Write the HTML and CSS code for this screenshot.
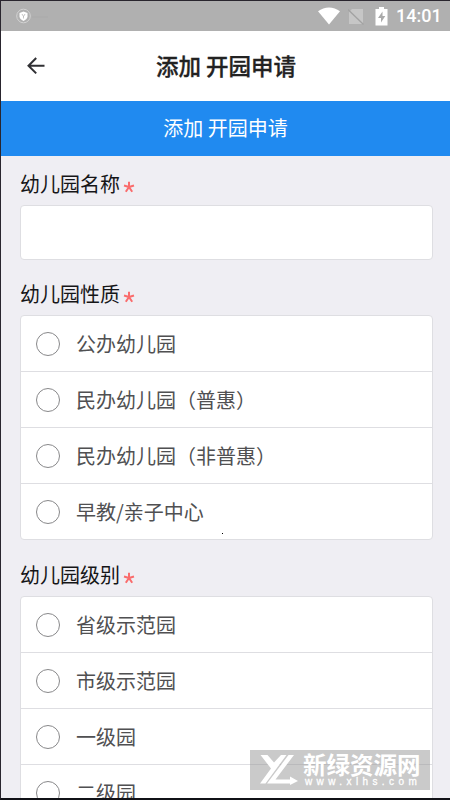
FILE: index.html
```html
<!DOCTYPE html>
<html lang="zh-CN">
<head>
<meta charset="utf-8">
<meta name="viewport" content="width=device-width, initial-scale=1">
<title>添加 开园申请</title>
<link rel="stylesheet" href="styles.css">
</head>
<body>
<div class="screen">
  <header class="status">
    <svg class="shield" width="38" height="16" viewBox="0 0 38 16">
      <circle cx="8.500" cy="8" r="6.800" fill="none" stroke="#d2d2d2" stroke-width="1"/>
      <path d="M8.500 3.600 12.500 5v3.200c0 2-1.600 3.500-4 4.700-2.400-1.200-4-2.700-4-4.700V5z" fill="#fff"/>
      <path d="M7 6 8.500 8.500 10 6M8.500 8v2.500" fill="none" stroke="#b8b8b8" stroke-width=".8"/>
      <path d="M17 9h16" stroke="#a9a9a9" stroke-width=".7"/>
    </svg>
    <div class="status-right">
      <svg class="wifi" width="22" height="18" viewBox="0 0 22 18"><path d="M0 4.300C6.500-.900 15.500-.900 22 4.300L11 17.500z" fill="#fff"/></svg>
      <svg class="sim" width="17" height="17" viewBox="0 0 17 17"><path d="M4 1h11v15H1V4z" fill="#c6c6c6"/><path d="M0 1.500 15.500 16.500" stroke="#a2a2a2" stroke-width="1.300"/></svg>
      <svg class="battery" width="13" height="19" viewBox="0 0 13 19"><path d="M4 0h5v2h3.500v16.500H.5V2H4z" fill="#fff"/><path d="M7.500 4.500 3 11h3v4.500L10.300 9H7.500z" fill="#aaa"/></svg>
      <span class="clock">14:01</span>
    </div>
  </header>
  <nav class="appbar">
    <svg class="back" width="20" height="20" viewBox="0 0 20 20"><path d="M11.200 2 3.500 9.700l7.700 7.700M3.500 9.700h16" fill="none" stroke="#303034" stroke-width="2"/></svg>
    <h1 class="title">添加 开园申请</h1>
  </nav>
  <div class="banner">添加 开园申请</div>
  <main class="form">
    <section class="field">
      <label class="label" for="name">幼儿园名称<svg class="star" width="12" height="12" viewBox="0 0 12 12"><path d="M6 6V.7M6 6 1 4.500M6 6l5-1.500M6 6l-3.200 4.700M6 6l3.200 4.700"/></svg></label>
      <input class="text-input" id="name" type="text">
    </section>
    <section class="field field-nature">
      <div class="label">幼儿园性质<svg class="star" width="12" height="12" viewBox="0 0 12 12"><path d="M6 6V.7M6 6 1 4.500M6 6l5-1.500M6 6l-3.200 4.700M6 6l3.200 4.700"/></svg></div>
      <ul class="options">
        <li class="option"><i class="radio"></i>公办幼儿园</li>
        <li class="option"><i class="radio"></i>民办幼儿园（普惠）</li>
        <li class="option"><i class="radio"></i>民办幼儿园（非普惠）</li>
        <li class="option"><i class="radio"></i>早教/亲子中心</li>
      </ul>
    </section>
    <section class="field">
      <div class="label">幼儿园级别<svg class="star" width="12" height="12" viewBox="0 0 12 12"><path d="M6 6V.7M6 6 1 4.500M6 6l5-1.500M6 6l-3.200 4.700M6 6l3.200 4.700"/></svg></div>
      <ul class="options">
        <li class="option"><i class="radio"></i>省级示范园</li>
        <li class="option"><i class="radio"></i>市级示范园</li>
        <li class="option"><i class="radio"></i>一级园</li>
        <li class="option"><i class="radio"></i>二级园</li>
      </ul>
    </section>
  </main>
  <i class="dot"></i>
  <aside class="watermark">
    <svg class="mark" width="40" height="32" viewBox="0 0 40 32">
      <path d="M1.500 1h7l6.500 7.500L22 1h5.500L6.500 29.500H1l11-15zM29.500 1H35L16.500 25.500H31V22.500L39 27l-8 4v-1.500H8z" fill="#fff"/>
    </svg>
    <div class="brand">
      <span class="brand-name">新绿资源网</span>
      <span class="brand-url">www.xlhs.com</span>
    </div>
  </aside>
</div>
</body>
</html>
```
FILE: styles.css
```css
* { box-sizing: border-box; }

body {
  margin: 0;
  font-family: "Noto Sans CJK SC", sans-serif;
}

.screen {
  position: relative;
  display: flex;
  flex-direction: column;
  height: 800px;
  overflow: hidden;
  border: solid #29252e;
  border-width: 1px 0 2px 1px;
  border-bottom-color: #101116;
  background: #efeef3;
}

.status {
  flex: none;
  display: flex;
  align-items: center;
  justify-content: space-between;
  height: 30px;
  padding: 0 9px 0 14px;
  background: #b0b0b0;
}

.status-right { display: flex; align-items: center; }
.sim { margin-left: 8px; }
.battery { margin-left: 10px; }

.clock {
  width: 45px;
  margin-left: 8px;
  color: #fff;
  font: 500 18px/30px Roboto, sans-serif;
  white-space: nowrap;
}

.appbar {
  flex: none;
  display: grid;
  grid-template-columns: 26px 1fr 26px;
  align-items: center;
  height: 70px;
  padding: 0 23px 0 24px;
  background: #fff;
}

.title {
  margin: 0;
  color: #222;
  font-size: 22.5px;
  font-weight: 500;
  -webkit-text-stroke: .3px #222;
  line-height: 68px;
  padding-bottom: 2px;
  text-align: center;
}

.banner {
  flex: none;
  height: 55px;
  background: #208af0;
  color: #fff;
  font-size: 20px;
  line-height: 54px;
  text-align: center;
}

.form { padding: 13px 17px 0 19px; }
.field { margin-bottom: 19px; }
.field-nature { margin-bottom: 20px; }

.label {
  display: flex;
  align-items: center;
  height: 30px;
  margin-bottom: 6px;
  color: #151517;
  font-size: 20px;
  line-height: 30px;
}

.star {
  margin: 5px 0 0 3px;
  fill: none;
  stroke: #fa6c6c;
  stroke-width: 2;
}

.text-input,
.options {
  display: block;
  width: 100%;
  margin: 0;
  border: 1px solid #dedee2;
  border-radius: 4px;
  background: #fff;
}

.text-input { height: 55px; padding: 0 15px; font: inherit; outline: none; }
.options { padding: 0; list-style: none; }

.option {
  display: flex;
  align-items: center;
  height: 56px;
  padding-left: 15px;
  border-bottom: 1px solid #dedee2;
  color: #505052;
  font-size: 20px;
  line-height: 30px;
}

.option:last-child { height: 55px; border-bottom: 0; }

.radio {
  width: 24px;
  height: 24px;
  margin-right: 16px;
  border: 1.5px solid #88888a;
  border-radius: 50%;
}

.dot {
  position: absolute;
  left: 221px;
  top: 532px;
  width: 1px;
  height: 1px;
  background: #000;
}

.watermark {
  position: absolute;
  left: 249px;
  top: 749px;
  display: flex;
  width: 180px;
  height: 40px;
  padding: 4px 0 0 9px;
  background: rgba(150, 150, 150, .5);
  color: #fff;
}

.brand { display: flex; flex-direction: column; margin-left: 4px; }
.brand-name { font-size: 23.5px; font-weight: 700; line-height: 21px; white-space: nowrap; }
.brand-url { margin-top: 2px; padding-left: 2px; font: 10px/10px "Liberation Sans", sans-serif; -webkit-text-stroke: .3px #fff; letter-spacing: 4.4px; white-space: nowrap; }
```
